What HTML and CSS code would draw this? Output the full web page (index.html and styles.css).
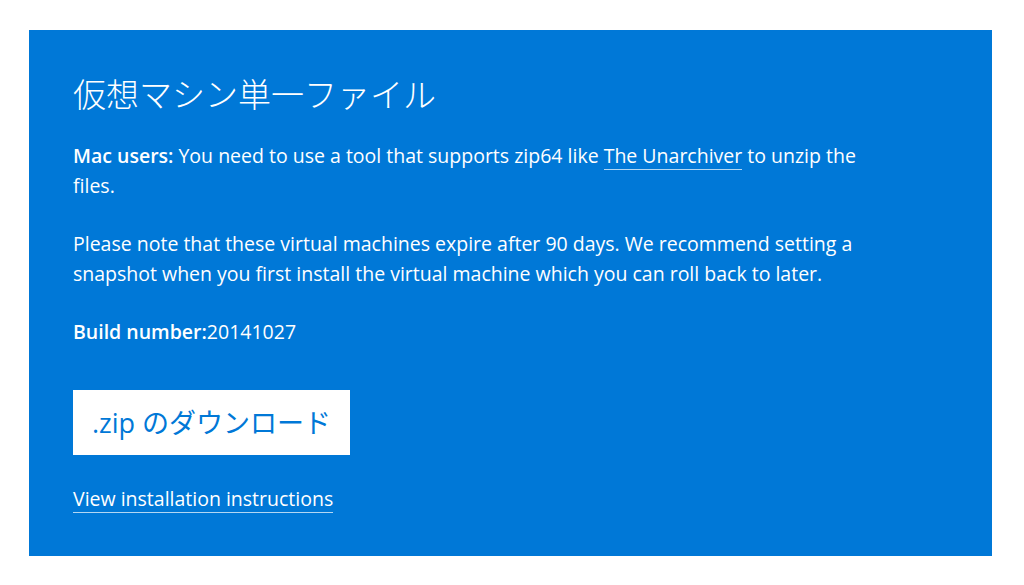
FILE: index.html
```html
<!DOCTYPE html>
<html lang="ja">
<head>
  <meta charset="UTF-8" />
  <meta name="viewport" content="width=device-width, initial-scale=1.0" />
  <title>仮想マシン単一ファイル</title>
  <link rel="stylesheet" href="styles.css">
</head>
<body>
  <section class="panel">
    <h2>仮想マシン単一ファイル</h2>

    <p><strong>Mac users:</strong> You need to use a tool that supports zip64 like <a href="#">The Unarchiver</a> to unzip the files.</p>

    <p>Please note that these virtual machines expire after 90 days. We recommend setting a snapshot when you first install the virtual machine which you can roll back to later.</p>

    <p><strong>Build number:</strong>20141027</p>

    <a class="download" href="#">.zip のダウンロード</a>

    <a class="instructions" href="#">View installation instructions</a>
  </section>
</body>
</html>
```

FILE: styles.css
```css
body {
  margin: 0;
  padding: 30px 32px 29px 29px;
  background-color: #fff;
  font-family: 'Open Sans', 'Noto Sans CJK JP', sans-serif;
}

.panel {
  background-color: #0078d7;
  color: #fff;
  padding: 28px 44px 42px 44px;
  height: 456px;
  box-sizing: content-box;
}

h2 {
  margin: 0 0 13px;
  font-family: 'Noto Sans CJK JP', sans-serif;
  font-weight: 300;
  font-size: 33px;
  line-height: 70px;
}

p {
  margin: 0 0 28px;
  max-width: 800px;
  font-size: 19.5px;
  line-height: 30px;
}

strong {
  font-weight: 600;
}

p a {
  color: #fff;
  text-decoration: none;
  border-bottom: 1px solid rgba(255, 255, 255, 0.7);
}

.download {
  display: table;
  margin-top: 43px;
  padding: 0 19px;
  height: 65px;
  line-height: 65px;
  background-color: #fff;
  color: #0078d7;
  font-size: 27px;
  text-decoration: none;
}

.instructions {
  display: table;
  margin-top: 31px;
  color: #fff;
  font-size: 19.5px;
  line-height: 26px;
  text-decoration: none;
  border-bottom: 1px solid rgba(255, 255, 255, 0.7);
}
```
